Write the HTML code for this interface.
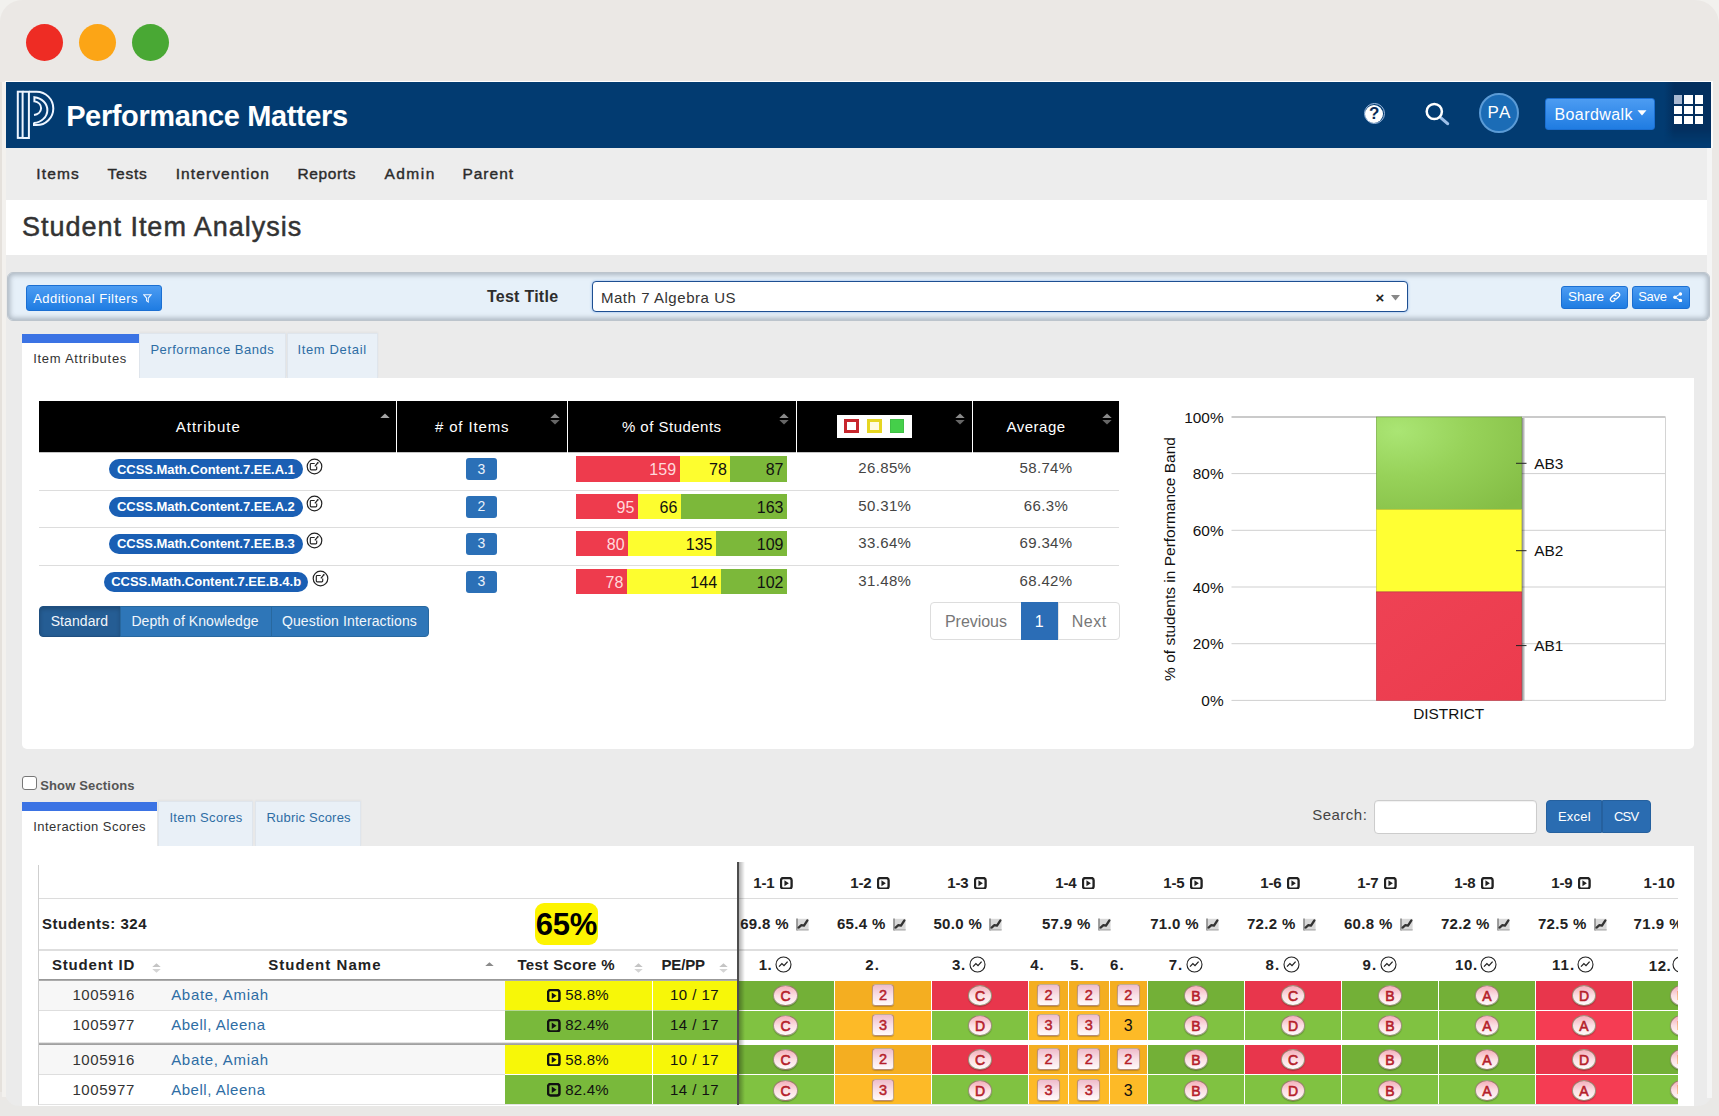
<!DOCTYPE html>
<html lang="en"><head><meta charset="utf-8"><title>Student Item Analysis</title>
<style>
html,body{margin:0;padding:0}
body{width:1719px;height:1116px;overflow:hidden;position:relative;background:#ebe8e5;font-family:'Liberation Sans', sans-serif;}
div,span.t,svg{position:absolute;box-sizing:border-box}
span.t{white-space:nowrap;display:block}

.btn{border-radius:3px;background:linear-gradient(#4c9cf2,#1f7ce2);border:1px solid #1b6fd2}
.tab{background:#e9f0f7;border:1px solid #dfe5ec;border-bottom:none;box-shadow:0 -1px 2px rgba(0,0,0,.04)}
.pill{background:#1a5fb4;border-radius:10px}
.nb{background:#2b70b7;border-radius:3px}
.ov{border-radius:50%;background:linear-gradient(#f4afbb,#fbdfe3 50%,#fffafa);border:1px solid rgba(60,70,20,.5);box-shadow:0 1px 1px rgba(0,0,0,.25)}
.sq{border-radius:3.5px;background:linear-gradient(#eebccb,#f9e0e6 50%,#fffafa);border:1px solid rgba(120,80,10,.45);box-shadow:0 1px 1px rgba(0,0,0,.2)}
</style></head>
<body>
<div style="left:0px;top:0px;width:1719px;height:1116px;background:#f2f1ee"></div>
<div style="left:0px;top:0px;width:1719px;height:1116px;background:#ebe8e5;border-radius:22px 24px 0 0"></div>
<div style="left:0px;top:1100px;width:1719px;height:16px;background:#e9e8e6"></div>
<div style="left:26.1px;top:23.7px;width:37.2px;height:37.2px;border-radius:50%;background:#ee2c24"></div>
<div style="left:79px;top:23.7px;width:37.2px;height:37.2px;border-radius:50%;background:#fca516"></div>
<div style="left:131.8px;top:23.7px;width:37.2px;height:37.2px;border-radius:50%;background:#49a834"></div>
<div style="left:5px;top:81px;width:1707px;height:1025px;background:#ebebeb;border-radius:0 0 14px 14px"></div>
<div style="left:1707px;top:148px;width:5px;height:950px;background:#f5f5f5"></div>
<div style="left:0px;top:82px;width:2.2px;height:1010px;background:#e5e1dc"></div>
<div style="left:2.2px;top:82px;width:3.6px;height:1015px;background:#f3f1ee"></div>
<div style="left:5px;top:81px;width:1707px;height:1px;background:#fff"></div>
<div style="left:6px;top:82px;width:1705px;height:66px;background:#023b71"></div>
<div style="left:1711px;top:81px;width:1.6px;height:67px;background:#fbfbfb"></div>
<div style="left:1664px;top:82px;width:47px;height:62px;background:linear-gradient(90deg,#023b71,#032f5e 22%);-webkit-mask-image:linear-gradient(#000 75%,transparent);mask-image:linear-gradient(#000 75%,transparent)"></div>
<svg style="left:6px;top:82px" width="60" height="66" viewBox="6 82 60 66" fill="none" stroke="#eef5ff" stroke-width="2" stroke-linejoin="miter">
<rect x="17.8" y="91.7" width="4.8" height="46.2"/>
<path d="M22.6 91.7H28.9V137.9H22.6"/>
<path d="M28.9 91.7H36.6A16.7 16.7 0 0 1 36.6 125.1H34V122.6"/>
<path d="M34 122.9A14.4 12.9 0 0 0 34.4 97.2V101.3A8.3 6.9 0 0 1 34 114.9"/>
</svg>
<span id="t0" class="t" style="left:66.15px;top:98.53px;font-size:29px;line-height:34.8px;font-weight:700;color:#fff;letter-spacing:-0.364px;">Performance Matters</span>
<div style="left:1363.5px;top:103.3px;width:21.2px;height:21.2px;border-radius:50%;border:1px solid #9fbbe0"></div>
<div style="left:1365.1px;top:104.9px;width:18px;height:18px;border-radius:50%;background:#fff"></div>
<span id="t1" class="t" style="left:1224.2px;width:300px;text-align:center;top:104.20px;font-size:17px;line-height:20.4px;font-weight:700;color:#082b57;">?</span>
<svg style="left:1420px;top:98px" width="34" height="32" viewBox="1420 98 34 32" fill="none">
<line x1="1440.6" y1="117.6" x2="1447.6" y2="123.6" stroke="#9dbfe8" stroke-width="3.2" stroke-linecap="round"/>
<circle cx="1434.3" cy="111.5" r="7.6" stroke="#fff" stroke-width="2.5"/></svg>
<div style="left:1479px;top:93.3px;width:39.8px;height:39.8px;border-radius:50%;background:#1b6cb6;border:2px solid #5b9bd6"></div>
<span id="t2" class="t" style="left:1487.40px;top:103.20px;font-size:17px;line-height:20.4px;color:#fff;letter-spacing:1.478px;">PA</span>
<div class="btn" style="left:1545px;top:97.7px;width:110.3px;height:32px;"></div>
<span id="t3" class="t" style="left:1554.40px;top:104.58px;font-size:16px;line-height:19.2px;color:#fff;letter-spacing:0.437px;">Boardwalk</span>
<svg style="left:1637px;top:110px" width="10" height="6" viewBox="0 0 10 6"><path d="M0.5 0.3h9L5 5.6z" fill="#fff"/></svg>
<div style="left:1674px;top:95.3px;width:8.3px;height:8.3px;background:#a9b9d2"></div>
<div style="left:1684.3px;top:95.3px;width:8.3px;height:8.3px;background:#fff"></div>
<div style="left:1694.6px;top:95.3px;width:8.3px;height:8.3px;background:#fff"></div>
<div style="left:1674px;top:105.6px;width:8.3px;height:8.3px;background:#fff"></div>
<div style="left:1684.3px;top:105.6px;width:8.3px;height:8.3px;background:#fff"></div>
<div style="left:1694.6px;top:105.6px;width:8.3px;height:8.3px;background:#fff"></div>
<div style="left:1674px;top:115.9px;width:8.3px;height:8.3px;background:#fff"></div>
<div style="left:1684.3px;top:115.9px;width:8.3px;height:8.3px;background:#fff"></div>
<div style="left:1694.6px;top:115.9px;width:8.3px;height:8.3px;background:#fff"></div>
<div style="left:6px;top:148px;width:1701px;height:52px;background:#ededed"></div>
<span id="t4" class="t" style="left:36.15px;top:165.08px;font-size:15.5px;line-height:18.6px;color:#2b2b2b;letter-spacing:1.198px;-webkit-text-stroke:.4px #2b2b2b;">Items</span>
<span id="t5" class="t" style="left:107.40px;top:165.08px;font-size:15.5px;line-height:18.6px;color:#2b2b2b;letter-spacing:0.816px;-webkit-text-stroke:.4px #2b2b2b;">Tests</span>
<span id="t6" class="t" style="left:175.65px;top:165.08px;font-size:15.5px;line-height:18.6px;color:#2b2b2b;letter-spacing:1.109px;-webkit-text-stroke:.4px #2b2b2b;">Intervention</span>
<span id="t7" class="t" style="left:297.40px;top:165.08px;font-size:15.5px;line-height:18.6px;color:#2b2b2b;letter-spacing:0.653px;-webkit-text-stroke:.4px #2b2b2b;">Reports</span>
<span id="t8" class="t" style="left:384.40px;top:165.08px;font-size:15.5px;line-height:18.6px;color:#2b2b2b;letter-spacing:1.503px;-webkit-text-stroke:.4px #2b2b2b;">Admin</span>
<span id="t9" class="t" style="left:462.40px;top:165.08px;font-size:15.5px;line-height:18.6px;color:#2b2b2b;letter-spacing:1.006px;-webkit-text-stroke:.4px #2b2b2b;">Parent</span>
<div style="left:6px;top:200px;width:1701px;height:55px;background:#fff"></div>
<span id="t10" class="t" style="left:21.90px;top:210.71px;font-size:27px;line-height:32.4px;color:#333;letter-spacing:0.990px;-webkit-text-stroke:0.5px #333;">Student Item Analysis</span>
<div style="left:6.6px;top:272.3px;width:1703.6px;height:48.4px;background:#e6f0f9;border-radius:6px;border:1px solid #bcc4cc;box-shadow:inset 0 0 5px 2px rgba(115,125,138,.5)"></div>
<div class="btn" style="left:26px;top:285px;width:136px;height:26px;"></div>
<span id="t11" class="t" style="left:33.15px;top:291.35px;font-size:13px;line-height:15.6px;color:#fff;letter-spacing:0.491px;">Additional Filters</span>
<svg style="left:143px;top:294px" width="8.8" height="8.8" viewBox="0 0 10 10" fill="none" stroke="#eef5ff" stroke-width="1.2"><path d="M0.8 0.8h8.4L6 4.6V9L4 7.6V4.6z"/></svg>
<span id="t12" class="t" style="left:486.90px;top:286.88px;font-size:16px;line-height:19.2px;font-weight:700;color:#2d2d2d;letter-spacing:0.270px;">Test Title</span>
<div style="left:591.5px;top:281px;width:816px;height:31.4px;background:#fff;border:1.7px solid #1d4f92;border-radius:4px;box-shadow:0 0 2.5px rgba(90,150,230,.7)"></div>
<span id="t13" class="t" style="left:600.90px;top:288.67px;font-size:15px;line-height:18px;color:#333;letter-spacing:0.550px;">Math 7 Algebra US</span>
<span id="t14" class="t" style="left:1229.8px;width:300px;text-align:center;top:289.17px;font-size:15px;line-height:18px;font-weight:700;color:#222;">&times;</span>
<svg style="left:1390.5px;top:294.5px" width="9" height="6" viewBox="0 0 9 6"><path d="M0 0h9L4.5 5.6z" fill="#888"/></svg>
<div class="btn" style="left:1561.2px;top:285.5px;width:66.6px;height:23px;"></div>
<span id="t15" class="t" style="left:1568.10px;top:288.86px;font-size:13.5px;line-height:16.2px;color:#fff;letter-spacing:-0.008px;">Share</span>
<svg style="left:1608.5px;top:291px" width="12" height="12" viewBox="0 0 12 12" fill="none" stroke="#fff" stroke-width="1.3" stroke-linecap="round"><path d="M5 7.2a2.2 2.2 0 0 0 3.1 0l2-2a2.2 2.2 0 0 0-3.1-3.1l-.8.8"/><path d="M7 4.8a2.2 2.2 0 0 0-3.1 0l-2 2a2.2 2.2 0 0 0 3.1 3.1l.8-.8"/></svg>
<div class="btn" style="left:1631.5px;top:285.5px;width:58.5px;height:23px;"></div>
<span id="t16" class="t" style="left:1638.20px;top:289.15px;font-size:13px;line-height:15.6px;color:#fff;letter-spacing:-0.280px;">Save</span>
<svg style="left:1673px;top:292px" width="9.5" height="10.4" viewBox="0 0 11 12" fill="#fff" stroke="#fff" stroke-width="1.2"><circle cx="8.6" cy="2.2" r="1.4"/><circle cx="2.2" cy="6" r="1.4"/><circle cx="8.6" cy="9.8" r="1.4"/><path d="M8.6 2.2L2.2 6l6.4 3.8" fill="none"/></svg>
<div class="tab" style="left:139px;top:333px;width:146.5px;height:45px;"></div>
<span id="t17" class="t" style="left:150.40px;top:342.35px;font-size:13px;line-height:15.6px;color:#2e6da4;letter-spacing:0.534px;">Performance Bands</span>
<div class="tab" style="left:286.5px;top:333px;width:91.5px;height:45px;"></div>
<span id="t18" class="t" style="left:297.40px;top:342.35px;font-size:13px;line-height:15.6px;color:#2e6da4;letter-spacing:0.656px;">Item Detail</span>
<div style="left:22px;top:378px;width:1672px;height:370.5px;background:#fff;border-radius:0 0 5px 5px"></div>
<div style="left:22px;top:334px;width:116.5px;height:46px;background:#fff"></div>
<div style="left:22px;top:334px;width:116.5px;height:9px;background:#3b73e4"></div>
<span id="t19" class="t" style="left:33.15px;top:350.85px;font-size:13px;line-height:15.6px;color:#333;letter-spacing:0.722px;">Item Attributes</span>
<div style="left:39px;top:401px;width:1080px;height:51px;background:#000"></div>
<div style="left:39px;top:452px;width:1080px;height:1px;background:#c4c4c4"></div>
<div style="left:396px;top:401px;width:1px;height:52px;background:#fff"></div>
<div style="left:567px;top:401px;width:1px;height:52px;background:#fff"></div>
<div style="left:796px;top:401px;width:1px;height:52px;background:#fff"></div>
<div style="left:972px;top:401px;width:1px;height:52px;background:#fff"></div>
<span id="t20" class="t" style="left:175.65px;top:418.17px;font-size:15px;line-height:18px;color:#fff;letter-spacing:1.041px;">Attribute</span>
<span id="t21" class="t" style="left:434.90px;top:418.17px;font-size:15px;line-height:18px;color:#fff;letter-spacing:0.871px;"># of Items</span>
<span id="t22" class="t" style="left:621.90px;top:418.17px;font-size:15px;line-height:18px;color:#fff;letter-spacing:0.483px;">% of Students</span>
<span id="t23" class="t" style="left:1006.40px;top:418.17px;font-size:15px;line-height:18px;color:#fff;letter-spacing:0.515px;">Average</span>
<svg style="left:379.5px;top:412.5px" width="10" height="12" viewBox="0 0 10 12"><path d="M0.3 5L5 0.6L9.7 5z" fill="#a5a5a5"/></svg>
<svg style="left:550px;top:413px" width="10" height="12" viewBox="0 0 10 12"><path d="M0.3 5L5 0.6L9.7 5z" fill="#8a8a8a"/><path d="M0.3 7L5 11.4L9.7 7z" fill="#666"/></svg>
<svg style="left:779px;top:413px" width="10" height="12" viewBox="0 0 10 12"><path d="M0.3 5L5 0.6L9.7 5z" fill="#8a8a8a"/><path d="M0.3 7L5 11.4L9.7 7z" fill="#666"/></svg>
<svg style="left:955px;top:413px" width="10" height="12" viewBox="0 0 10 12"><path d="M0.3 5L5 0.6L9.7 5z" fill="#8a8a8a"/><path d="M0.3 7L5 11.4L9.7 7z" fill="#666"/></svg>
<svg style="left:1102px;top:413px" width="10" height="12" viewBox="0 0 10 12"><path d="M0.3 5L5 0.6L9.7 5z" fill="#8a8a8a"/><path d="M0.3 7L5 11.4L9.7 7z" fill="#666"/></svg>
<div style="left:837px;top:414.5px;width:75px;height:23.5px;background:#fff"></div>
<div style="left:844px;top:419px;width:14.7px;height:13.7px;border:3px solid #c7262d;background:#fff"></div>
<div style="left:867px;top:419px;width:14.7px;height:13.7px;border:3px solid #e6d622;background:#fffbe0"></div>
<div style="left:890px;top:419px;width:14.2px;height:13.7px;background:#45cf4a;border:1px solid #3fc044"></div>
<div class="pill" style="left:109px;top:459px;width:193.5px;height:20px;"></div>
<span id="t24" class="t" style="left:116.90px;top:461.65px;font-size:13px;line-height:15.6px;font-weight:700;color:#fff;letter-spacing:-0.019px;">CCSS.Math.Content.7.EE.A.1</span>
<svg style="left:306.2px;top:457.7px" width="17" height="17" viewBox="0 0 17 17" fill="none" stroke="#222" stroke-width="1.1"><circle cx="8.5" cy="8.5" r="7.3" stroke-width="1.2"/><path d="M8.7 5.5H5.2Q4.3 5.5 4.3 6.4V10.9Q4.3 11.8 5.2 11.8H9.8Q10.7 11.8 10.7 10.9V8.4" stroke-width="1.15"/><path d="M8.9 8.3L11.5 5.2" stroke-width="1.3"/><circle cx="11.8" cy="4.8" r=".9" fill="#222" stroke="none"/></svg>
<div class="nb" style="left:465.5px;top:458px;width:31.5px;height:22px;"></div>
<span id="t25" class="t" style="left:331.3px;width:300px;text-align:center;top:460.96px;font-size:14px;line-height:16.8px;color:#eaf2fb;">3</span>
<div style="left:576px;top:456.2px;width:103.546px;height:25.5px;background:#ee3b4d"></div>
<div style="left:679.546px;top:456.2px;width:50.7963px;height:25.5px;background:#fdfd2f"></div>
<div style="left:730.343px;top:456.2px;width:56.6574px;height:25.5px;background:#7cb83a"></div>
<span id="t26" class="t" style="left:376.046px;width:300px;text-align:center;top:460.18px;font-size:16px;line-height:19.2px;color:#ffd9dc;text-align:right;">159</span>
<span id="t27" class="t" style="left:426.843px;width:300px;text-align:center;top:460.18px;font-size:16px;line-height:19.2px;color:#111;text-align:right;">78</span>
<span id="t28" class="t" style="left:483.5px;width:300px;text-align:center;top:460.18px;font-size:16px;line-height:19.2px;color:#111;text-align:right;">87</span>
<span id="t29" class="t" style="left:734.8px;width:300px;text-align:center;top:459.17px;font-size:15px;line-height:18px;color:#444;letter-spacing:.35px;">26.85%</span>
<span id="t30" class="t" style="left:896px;width:300px;text-align:center;top:459.17px;font-size:15px;line-height:18px;color:#444;letter-spacing:.35px;">58.74%</span>
<div style="left:39px;top:490px;width:1080px;height:1px;background:#ddd"></div>
<div class="pill" style="left:109px;top:496.5px;width:193.5px;height:20px;"></div>
<span id="t31" class="t" style="left:116.90px;top:499.15px;font-size:13px;line-height:15.6px;font-weight:700;color:#fff;letter-spacing:-0.019px;">CCSS.Math.Content.7.EE.A.2</span>
<svg style="left:306.2px;top:495.2px" width="17" height="17" viewBox="0 0 17 17" fill="none" stroke="#222" stroke-width="1.1"><circle cx="8.5" cy="8.5" r="7.3" stroke-width="1.2"/><path d="M8.7 5.5H5.2Q4.3 5.5 4.3 6.4V10.9Q4.3 11.8 5.2 11.8H9.8Q10.7 11.8 10.7 10.9V8.4" stroke-width="1.15"/><path d="M8.9 8.3L11.5 5.2" stroke-width="1.3"/><circle cx="11.8" cy="4.8" r=".9" fill="#222" stroke="none"/></svg>
<div class="nb" style="left:465.5px;top:495.5px;width:31.5px;height:22px;"></div>
<span id="t32" class="t" style="left:331.3px;width:300px;text-align:center;top:498.46px;font-size:14px;line-height:16.8px;color:#eaf2fb;">2</span>
<div style="left:576px;top:493.7px;width:61.8673px;height:25.5px;background:#ee3b4d"></div>
<div style="left:637.867px;top:493.7px;width:42.9815px;height:25.5px;background:#fdfd2f"></div>
<div style="left:680.849px;top:493.7px;width:106.151px;height:25.5px;background:#7cb83a"></div>
<span id="t33" class="t" style="left:334.367px;width:300px;text-align:center;top:497.68px;font-size:16px;line-height:19.2px;color:#ffd9dc;text-align:right;">95</span>
<span id="t34" class="t" style="left:377.349px;width:300px;text-align:center;top:497.68px;font-size:16px;line-height:19.2px;color:#111;text-align:right;">66</span>
<span id="t35" class="t" style="left:483.5px;width:300px;text-align:center;top:497.68px;font-size:16px;line-height:19.2px;color:#111;text-align:right;">163</span>
<span id="t36" class="t" style="left:734.8px;width:300px;text-align:center;top:496.67px;font-size:15px;line-height:18px;color:#444;letter-spacing:.35px;">50.31%</span>
<span id="t37" class="t" style="left:896px;width:300px;text-align:center;top:496.67px;font-size:15px;line-height:18px;color:#444;letter-spacing:.35px;">66.3%</span>
<div style="left:39px;top:527px;width:1080px;height:1px;background:#ddd"></div>
<div class="pill" style="left:109px;top:533.5px;width:193.5px;height:20px;"></div>
<span id="t38" class="t" style="left:116.90px;top:536.15px;font-size:13px;line-height:15.6px;font-weight:700;color:#fff;letter-spacing:-0.019px;">CCSS.Math.Content.7.EE.B.3</span>
<svg style="left:306.2px;top:532.2px" width="17" height="17" viewBox="0 0 17 17" fill="none" stroke="#222" stroke-width="1.1"><circle cx="8.5" cy="8.5" r="7.3" stroke-width="1.2"/><path d="M8.7 5.5H5.2Q4.3 5.5 4.3 6.4V10.9Q4.3 11.8 5.2 11.8H9.8Q10.7 11.8 10.7 10.9V8.4" stroke-width="1.15"/><path d="M8.9 8.3L11.5 5.2" stroke-width="1.3"/><circle cx="11.8" cy="4.8" r=".9" fill="#222" stroke="none"/></svg>
<div class="nb" style="left:465.5px;top:532.5px;width:31.5px;height:22px;"></div>
<span id="t39" class="t" style="left:331.3px;width:300px;text-align:center;top:535.46px;font-size:14px;line-height:16.8px;color:#eaf2fb;">3</span>
<div style="left:576px;top:530.7px;width:52.0988px;height:25.5px;background:#ee3b4d"></div>
<div style="left:628.099px;top:530.7px;width:87.9167px;height:25.5px;background:#fdfd2f"></div>
<div style="left:716.015px;top:530.7px;width:70.9846px;height:25.5px;background:#7cb83a"></div>
<span id="t40" class="t" style="left:324.599px;width:300px;text-align:center;top:534.68px;font-size:16px;line-height:19.2px;color:#ffd9dc;text-align:right;">80</span>
<span id="t41" class="t" style="left:412.515px;width:300px;text-align:center;top:534.68px;font-size:16px;line-height:19.2px;color:#111;text-align:right;">135</span>
<span id="t42" class="t" style="left:483.5px;width:300px;text-align:center;top:534.68px;font-size:16px;line-height:19.2px;color:#111;text-align:right;">109</span>
<span id="t43" class="t" style="left:734.8px;width:300px;text-align:center;top:533.67px;font-size:15px;line-height:18px;color:#444;letter-spacing:.35px;">33.64%</span>
<span id="t44" class="t" style="left:896px;width:300px;text-align:center;top:533.67px;font-size:15px;line-height:18px;color:#444;letter-spacing:.35px;">69.34%</span>
<div style="left:39px;top:565px;width:1080px;height:1px;background:#ddd"></div>
<div class="pill" style="left:104.25px;top:571.5px;width:204px;height:20px;"></div>
<span id="t45" class="t" style="left:111.15px;top:574.15px;font-size:13px;line-height:15.6px;font-weight:700;color:#fff;">CCSS.Math.Content.7.EE.B.4.b</span>
<svg style="left:312.4px;top:570.2px" width="17" height="17" viewBox="0 0 17 17" fill="none" stroke="#222" stroke-width="1.1"><circle cx="8.5" cy="8.5" r="7.3" stroke-width="1.2"/><path d="M8.7 5.5H5.2Q4.3 5.5 4.3 6.4V10.9Q4.3 11.8 5.2 11.8H9.8Q10.7 11.8 10.7 10.9V8.4" stroke-width="1.15"/><path d="M8.9 8.3L11.5 5.2" stroke-width="1.3"/><circle cx="11.8" cy="4.8" r=".9" fill="#222" stroke="none"/></svg>
<div class="nb" style="left:465.5px;top:570.5px;width:31.5px;height:22px;"></div>
<span id="t46" class="t" style="left:331.3px;width:300px;text-align:center;top:573.46px;font-size:14px;line-height:16.8px;color:#eaf2fb;">3</span>
<div style="left:576px;top:568.7px;width:50.7963px;height:25.5px;background:#ee3b4d"></div>
<div style="left:626.796px;top:568.7px;width:93.7778px;height:25.5px;background:#fdfd2f"></div>
<div style="left:720.574px;top:568.7px;width:66.4259px;height:25.5px;background:#7cb83a"></div>
<span id="t47" class="t" style="left:323.296px;width:300px;text-align:center;top:572.68px;font-size:16px;line-height:19.2px;color:#ffd9dc;text-align:right;">78</span>
<span id="t48" class="t" style="left:417.074px;width:300px;text-align:center;top:572.68px;font-size:16px;line-height:19.2px;color:#111;text-align:right;">144</span>
<span id="t49" class="t" style="left:483.5px;width:300px;text-align:center;top:572.68px;font-size:16px;line-height:19.2px;color:#111;text-align:right;">102</span>
<span id="t50" class="t" style="left:734.8px;width:300px;text-align:center;top:571.67px;font-size:15px;line-height:18px;color:#444;letter-spacing:.35px;">31.48%</span>
<span id="t51" class="t" style="left:896px;width:300px;text-align:center;top:571.67px;font-size:15px;line-height:18px;color:#444;letter-spacing:.35px;">68.42%</span>
<div style="left:39px;top:605.5px;width:81.5px;height:31.5px;background:#255d94;border-radius:4px 0 0 4px;border:1px solid #1f4f80;box-shadow:inset 0 2px 4px rgba(0,0,0,.2)"></div>
<div style="left:120px;top:605.5px;width:151.5px;height:31.5px;background:#2e76b8;border:1px solid #28689f"></div>
<div style="left:271.2px;top:605.5px;width:157.6px;height:31.5px;background:#2e76b8;border:1px solid #28689f;border-radius:0 4px 4px 0"></div>
<span id="t52" class="t" style="left:50.65px;top:613.06px;font-size:14px;line-height:16.8px;color:#f2f6fb;letter-spacing:0.089px;">Standard</span>
<span id="t53" class="t" style="left:131.40px;top:613.06px;font-size:14px;line-height:16.8px;color:#f2f6fb;letter-spacing:0.065px;">Depth of Knowledge</span>
<span id="t54" class="t" style="left:281.90px;top:613.06px;font-size:14px;line-height:16.8px;color:#f2f6fb;letter-spacing:0.133px;">Question Interactions</span>
<div style="left:930px;top:602px;width:190px;height:37.5px;background:#fff;border:1px solid #ddd;border-radius:4px"></div>
<div style="left:1020.8px;top:602px;width:37.4px;height:37.5px;background:#2b6db6"></div>
<div style="left:1058.2px;top:603px;width:1px;height:35.5px;background:#e4e4e4"></div>
<span id="t55" class="t" style="left:945.00px;top:611.88px;font-size:16px;line-height:19.2px;color:#777;letter-spacing:-0.050px;">Previous</span>
<span id="t56" class="t" style="left:889.2px;width:300px;text-align:center;top:611.88px;font-size:16px;line-height:19.2px;color:#fff;">1</span>
<span id="t57" class="t" style="left:1071.70px;top:611.88px;font-size:16px;line-height:19.2px;color:#777;letter-spacing:0.531px;">Next</span>
<svg style="left:1140px;top:395px" width="550" height="345" viewBox="1140 395 550 345" font-family="'Liberation Sans', sans-serif" font-size="14" fill="#111"><defs><radialGradient id="gg" cx="0.15" cy="0.15" r="1.1"><stop offset="0" stop-color="#aae574"/><stop offset="0.45" stop-color="#97d259"/><stop offset="1" stop-color="#84bd45"/></radialGradient><linearGradient id="gr" x1="0" y1="0" x2="1" y2="1"><stop offset="0" stop-color="#ee4254"/><stop offset="1" stop-color="#ec3b4d"/></linearGradient><linearGradient id="sh" x1="0" y1="0" x2="1" y2="0"><stop offset="0" stop-color="#000" stop-opacity=".55"/><stop offset="1" stop-color="#000" stop-opacity="0"/></linearGradient></defs><line x1="1231.5" y1="417" x2="1665.5" y2="417" stroke="#b9b9b9" stroke-width="1.4"/><text x="1223.6" y="422.5" text-anchor="end" font-size="15.4">100%</text><line x1="1231.5" y1="473.6" x2="1665.5" y2="473.6" stroke="#cfcfcf" stroke-width="1"/><text x="1223.6" y="479.1" text-anchor="end" font-size="15.4">80%</text><line x1="1231.5" y1="530.3" x2="1665.5" y2="530.3" stroke="#cfcfcf" stroke-width="1"/><text x="1223.6" y="535.8" text-anchor="end" font-size="15.4">60%</text><line x1="1231.5" y1="587" x2="1665.5" y2="587" stroke="#cfcfcf" stroke-width="1"/><text x="1223.6" y="592.5" text-anchor="end" font-size="15.4">40%</text><line x1="1231.5" y1="643.7" x2="1665.5" y2="643.7" stroke="#cfcfcf" stroke-width="1"/><text x="1223.6" y="649.2" text-anchor="end" font-size="15.4">20%</text><line x1="1231.5" y1="700.4" x2="1665.5" y2="700.4" stroke="#cfcfcf" stroke-width="1"/><text x="1223.6" y="705.9" text-anchor="end" font-size="15.4">0%</text><line x1="1665.5" y1="417" x2="1665.5" y2="700.4" stroke="#d4d4d4" stroke-width="1"/><rect x="1521.5" y="418" width="4" height="282.4" fill="url(#sh)"/><rect x="1376.3" y="417" width="145.4" height="92.6" fill="url(#gg)" stroke="#6fa23a" stroke-width=".6"/><rect x="1376.3" y="509.6" width="145.4" height="82.3" fill="#ffff33" stroke="#c9c92a" stroke-width=".6"/><rect x="1376.3" y="591.9" width="145.4" height="108.5" fill="url(#gr)" stroke="#b83040" stroke-width=".6"/><line x1="1516" y1="463.3" x2="1526.5" y2="463.3" stroke="#222" stroke-width="1"/><text x="1534.3" y="468.8" font-size="15.4">AB3</text><line x1="1516" y1="550.7" x2="1526.5" y2="550.7" stroke="#222" stroke-width="1"/><text x="1534.3" y="556.2" font-size="15.4">AB2</text><line x1="1516" y1="645.6" x2="1526.5" y2="645.6" stroke="#222" stroke-width="1"/><text x="1534.3" y="651.1" font-size="15.4">AB1</text><text x="1448.7" y="718.6" text-anchor="middle" font-size="15.4">DISTRICT</text><text transform="translate(1175 559) rotate(-90)" text-anchor="middle" font-size="15.5">% of students in Performance Band</text></svg>
<div style="left:22px;top:776px;width:15px;height:14px;background:#fff;border:1px solid #777;border-radius:3px"></div>
<span id="t58" class="t" style="left:40.15px;top:777.55px;font-size:13px;line-height:15.6px;font-weight:700;color:#555;letter-spacing:0.165px;">Show Sections</span>
<div class="tab" style="left:157.5px;top:801px;width:95.5px;height:45px;"></div>
<span id="t59" class="t" style="left:169.40px;top:809.85px;font-size:13px;line-height:15.6px;color:#2e6da4;letter-spacing:0.359px;">Item Scores</span>
<div class="tab" style="left:255px;top:801px;width:106px;height:45px;"></div>
<span id="t60" class="t" style="left:266.40px;top:809.85px;font-size:13px;line-height:15.6px;color:#2e6da4;letter-spacing:0.213px;">Rubric Scores</span>
<span id="t61" class="t" style="left:1312.20px;top:806.37px;font-size:15px;line-height:18px;color:#444;letter-spacing:0.499px;">Search:</span>
<div style="left:1373.5px;top:800px;width:163px;height:33.5px;background:#fff;border:1px solid #ccc;border-radius:4px;box-shadow:inset 0 1px 1px rgba(0,0,0,.06)"></div>
<div style="left:1545.8px;top:800px;width:56.2px;height:33px;background:#2a6cb1;border-radius:4px 0 0 4px;border:1px solid #25609e"></div>
<div style="left:1602px;top:800px;width:49.3px;height:33px;background:#2a6cb1;border-radius:0 4px 4px 0;border:1px solid #25609e"></div>
<span id="t62" class="t" style="left:1557.90px;top:808.65px;font-size:13px;line-height:15.6px;color:#fff;letter-spacing:0.226px;">Excel</span>
<span id="t63" class="t" style="left:1613.90px;top:808.65px;font-size:13px;line-height:15.6px;color:#fff;letter-spacing:-0.767px;">CSV</span>
<div style="left:22px;top:846px;width:1672px;height:259.5px;background:#fff"></div>
<div style="left:22px;top:802px;width:134.5px;height:46px;background:#fff"></div>
<div style="left:22px;top:802px;width:134.5px;height:9px;background:#3b73e4"></div>
<span id="t64" class="t" style="left:33.15px;top:818.65px;font-size:13px;line-height:15.6px;color:#333;letter-spacing:0.451px;">Interaction Scores</span>
<div style="left:38px;top:865px;width:1px;height:239.5px;background:#cfcfcf"></div>
<div style="left:39px;top:898px;width:1639px;height:1px;background:#dcdcdc"></div>
<div style="left:39px;top:948.8px;width:1639px;height:2px;background:#dedede"></div>
<span id="t65" class="t" style="left:41.90px;top:915.17px;font-size:15px;line-height:18px;font-weight:700;color:#222;letter-spacing:0.528px;">Students: 324</span>
<div style="left:534.5px;top:903px;width:63.5px;height:42px;background:#fdf400;border-radius:9px"></div>
<span id="t66" class="t" style="left:535.70px;top:906.36px;font-size:31px;line-height:37.2px;font-weight:700;color:#000;letter-spacing:-0.173px;">65%</span>
<span id="t67" class="t" style="left:51.90px;top:956.17px;font-size:15px;line-height:18px;font-weight:700;color:#222;letter-spacing:0.828px;">Student ID</span>
<svg style="left:151.5px;top:961.8px" width="9" height="12" viewBox="0 0 10 12"><path d="M0.3 5L5 0.6L9.7 5z" fill="#c4c4c4"/><path d="M0.3 7L5 11.4L9.7 7z" fill="#d4d4d4"/></svg>
<span id="t68" class="t" style="left:268.15px;top:956.17px;font-size:15px;line-height:18px;font-weight:700;color:#222;letter-spacing:1.054px;">Student Name</span>
<svg style="left:485px;top:960.5px" width="9" height="12" viewBox="0 0 10 12"><path d="M0.3 5L5 0.6L9.7 5z" fill="#8a8a8a"/></svg>
<span id="t69" class="t" style="left:517.40px;top:956.17px;font-size:15px;line-height:18px;font-weight:700;color:#222;letter-spacing:0.373px;">Test Score %</span>
<svg style="left:633.5px;top:961.8px" width="9" height="12" viewBox="0 0 10 12"><path d="M0.3 5L5 0.6L9.7 5z" fill="#c4c4c4"/><path d="M0.3 7L5 11.4L9.7 7z" fill="#d4d4d4"/></svg>
<span id="t70" class="t" style="left:661.40px;top:956.17px;font-size:15px;line-height:18px;font-weight:700;color:#222;letter-spacing:-0.122px;">PE/PP</span>
<svg style="left:718.5px;top:961.8px" width="9" height="12" viewBox="0 0 10 12"><path d="M0.3 5L5 0.6L9.7 5z" fill="#c4c4c4"/><path d="M0.3 7L5 11.4L9.7 7z" fill="#d4d4d4"/></svg>
<div style="left:39px;top:980px;width:466px;height:30px;background:#f7f7f7"></div>
<span id="t71" class="t" style="left:72.40px;top:986.47px;font-size:15px;line-height:18px;color:#333;letter-spacing:0.591px;">1005916</span>
<span id="t72" class="t" style="left:171.15px;top:986.47px;font-size:15px;line-height:18px;color:#2e6da4;letter-spacing:0.701px;">Abate, Amiah</span>
<div style="left:505px;top:980px;width:147px;height:30px;background:#f7f708"></div>
<div style="left:653px;top:980px;width:84px;height:30px;background:#f7f708"></div>
<svg style="left:547px;top:988.55px" width="13.5" height="13.5" viewBox="0 0 14 14"><rect x="1.1" y="1.1" width="11.8" height="11.8" rx="2.6" fill="none" stroke="#111" stroke-width="2.6"/><path d="M4.9 3.6L9.9 7L4.9 10.4z" fill="#111"/></svg>
<span id="t73" class="t" style="left:565.15px;top:986.47px;font-size:15px;line-height:18px;color:#111;letter-spacing:0.226px;">58.8%</span>
<span id="t74" class="t" style="left:669.90px;top:986.47px;font-size:15px;line-height:18px;color:#111;letter-spacing:0.471px;">10 / 17</span>
<div style="left:737px;top:980.5px;width:97px;height:29px;background:#73b037"></div>
<div class="ov" style="left:773.1px;top:985px;width:24.8px;height:21.2px;"></div>
<span id="t75" class="t" style="left:635.5px;width:300px;text-align:center;top:988.06px;font-size:14px;line-height:16.8px;color:#b51f2b;-webkit-text-stroke:.6px #b51f2b;">C</span>
<div style="left:835px;top:980.5px;width:96px;height:29px;background:#f4ae21"></div>
<div class="sq" style="left:871.7px;top:984.1px;width:22.6px;height:22px;"></div>
<span id="t76" class="t" style="left:733px;width:300px;text-align:center;top:987.17px;font-size:14.5px;line-height:17.4px;color:#b51f2b;-webkit-text-stroke:.5px #b51f2b;">2</span>
<div style="left:932px;top:980.5px;width:96px;height:29px;background:#e8364c"></div>
<div class="ov" style="left:967.6px;top:985px;width:24.8px;height:21.2px;"></div>
<span id="t77" class="t" style="left:830px;width:300px;text-align:center;top:988.06px;font-size:14px;line-height:16.8px;color:#b51f2b;-webkit-text-stroke:.6px #b51f2b;">C</span>
<div style="left:1029px;top:980.5px;width:39px;height:29px;background:#f4ae21"></div>
<div class="sq" style="left:1037.2px;top:984.1px;width:22.6px;height:22px;"></div>
<span id="t78" class="t" style="left:898.5px;width:300px;text-align:center;top:987.17px;font-size:14.5px;line-height:17.4px;color:#b51f2b;-webkit-text-stroke:.5px #b51f2b;">2</span>
<div style="left:1069px;top:980.5px;width:39.5px;height:29px;background:#f4ae21"></div>
<div class="sq" style="left:1077.45px;top:984.1px;width:22.6px;height:22px;"></div>
<span id="t79" class="t" style="left:938.75px;width:300px;text-align:center;top:987.17px;font-size:14.5px;line-height:17.4px;color:#b51f2b;-webkit-text-stroke:.5px #b51f2b;">2</span>
<div style="left:1109.5px;top:980.5px;width:37.5px;height:29px;background:#f4ae21"></div>
<div class="sq" style="left:1116.95px;top:984.1px;width:22.6px;height:22px;"></div>
<span id="t80" class="t" style="left:978.25px;width:300px;text-align:center;top:987.17px;font-size:14.5px;line-height:17.4px;color:#b51f2b;-webkit-text-stroke:.5px #b51f2b;">2</span>
<div style="left:1148px;top:980.5px;width:96px;height:29px;background:#73b037"></div>
<div class="ov" style="left:1183.6px;top:985px;width:24.8px;height:21.2px;"></div>
<span id="t81" class="t" style="left:1046px;width:300px;text-align:center;top:988.06px;font-size:14px;line-height:16.8px;color:#b51f2b;-webkit-text-stroke:.6px #b51f2b;">B</span>
<div style="left:1245px;top:980.5px;width:96px;height:29px;background:#e8364c"></div>
<div class="ov" style="left:1280.6px;top:985px;width:24.8px;height:21.2px;"></div>
<span id="t82" class="t" style="left:1143px;width:300px;text-align:center;top:988.06px;font-size:14px;line-height:16.8px;color:#b51f2b;-webkit-text-stroke:.6px #b51f2b;">C</span>
<div style="left:1342px;top:980.5px;width:96px;height:29px;background:#73b037"></div>
<div class="ov" style="left:1377.6px;top:985px;width:24.8px;height:21.2px;"></div>
<span id="t83" class="t" style="left:1240px;width:300px;text-align:center;top:988.06px;font-size:14px;line-height:16.8px;color:#b51f2b;-webkit-text-stroke:.6px #b51f2b;">B</span>
<div style="left:1439px;top:980.5px;width:96px;height:29px;background:#73b037"></div>
<div class="ov" style="left:1474.6px;top:985px;width:24.8px;height:21.2px;"></div>
<span id="t84" class="t" style="left:1337px;width:300px;text-align:center;top:988.06px;font-size:14px;line-height:16.8px;color:#b51f2b;-webkit-text-stroke:.6px #b51f2b;">A</span>
<div style="left:1536px;top:980.5px;width:96px;height:29px;background:#e8364c"></div>
<div class="ov" style="left:1571.6px;top:985px;width:24.8px;height:21.2px;"></div>
<span id="t85" class="t" style="left:1434px;width:300px;text-align:center;top:988.06px;font-size:14px;line-height:16.8px;color:#b51f2b;-webkit-text-stroke:.6px #b51f2b;">D</span>
<div style="left:1633px;top:980.5px;width:45px;height:29px;background:#73b037"></div>
<div style="left:1633px;top:980.5px;width:45px;height:29.0px;overflow:hidden"><div class="ov" style="left:36.5px;top:4.5px;width:24px;height:20.6px"></div><span class="t" style="left:43.9px;top:7.2px;font-size:13px;line-height:15.6px;font-weight:700;color:#b51f2b">B</span></div>
<div style="left:39px;top:1010px;width:466px;height:30px;background:#fff"></div>
<span id="t86" class="t" style="left:72.40px;top:1016.47px;font-size:15px;line-height:18px;color:#333;letter-spacing:0.591px;">1005977</span>
<span id="t87" class="t" style="left:171.15px;top:1016.47px;font-size:15px;line-height:18px;color:#2e6da4;letter-spacing:0.531px;">Abell, Aleena</span>
<div style="left:505px;top:1010px;width:147px;height:30px;background:#79b93b"></div>
<div style="left:653px;top:1010px;width:84px;height:30px;background:#79b93b"></div>
<svg style="left:547px;top:1018.55px" width="13.5" height="13.5" viewBox="0 0 14 14"><rect x="1.1" y="1.1" width="11.8" height="11.8" rx="2.6" fill="none" stroke="#111" stroke-width="2.6"/><path d="M4.9 3.6L9.9 7L4.9 10.4z" fill="#111"/></svg>
<span id="t88" class="t" style="left:565.15px;top:1016.47px;font-size:15px;line-height:18px;color:#111;letter-spacing:0.226px;">82.4%</span>
<span id="t89" class="t" style="left:669.90px;top:1016.47px;font-size:15px;line-height:18px;color:#111;letter-spacing:0.471px;">14 / 17</span>
<div style="left:737px;top:1010.5px;width:97px;height:29px;background:#80c241"></div>
<div class="ov" style="left:773.1px;top:1015px;width:24.8px;height:21.2px;"></div>
<span id="t90" class="t" style="left:635.5px;width:300px;text-align:center;top:1018.06px;font-size:14px;line-height:16.8px;color:#b51f2b;-webkit-text-stroke:.6px #b51f2b;">C</span>
<div style="left:835px;top:1010.5px;width:96px;height:29px;background:#fdba27"></div>
<div class="sq" style="left:871.7px;top:1014.1px;width:22.6px;height:22px;"></div>
<span id="t91" class="t" style="left:733px;width:300px;text-align:center;top:1017.17px;font-size:14.5px;line-height:17.4px;color:#b51f2b;-webkit-text-stroke:.5px #b51f2b;">3</span>
<div style="left:932px;top:1010.5px;width:96px;height:29px;background:#80c241"></div>
<div class="ov" style="left:967.6px;top:1015px;width:24.8px;height:21.2px;"></div>
<span id="t92" class="t" style="left:830px;width:300px;text-align:center;top:1018.06px;font-size:14px;line-height:16.8px;color:#b51f2b;-webkit-text-stroke:.6px #b51f2b;">D</span>
<div style="left:1029px;top:1010.5px;width:39px;height:29px;background:#fdba27"></div>
<div class="sq" style="left:1037.2px;top:1014.1px;width:22.6px;height:22px;"></div>
<span id="t93" class="t" style="left:898.5px;width:300px;text-align:center;top:1017.17px;font-size:14.5px;line-height:17.4px;color:#b51f2b;-webkit-text-stroke:.5px #b51f2b;">3</span>
<div style="left:1069px;top:1010.5px;width:39.5px;height:29px;background:#fdba27"></div>
<div class="sq" style="left:1077.45px;top:1014.1px;width:22.6px;height:22px;"></div>
<span id="t94" class="t" style="left:938.75px;width:300px;text-align:center;top:1017.17px;font-size:14.5px;line-height:17.4px;color:#b51f2b;-webkit-text-stroke:.5px #b51f2b;">3</span>
<div style="left:1109.5px;top:1010.5px;width:37.5px;height:29px;background:#fdba27"></div>
<span id="t95" class="t" style="left:978.25px;width:300px;text-align:center;top:1016.08px;font-size:16px;line-height:19.2px;color:#111;">3</span>
<div style="left:1148px;top:1010.5px;width:96px;height:29px;background:#80c241"></div>
<div class="ov" style="left:1183.6px;top:1015px;width:24.8px;height:21.2px;"></div>
<span id="t96" class="t" style="left:1046px;width:300px;text-align:center;top:1018.06px;font-size:14px;line-height:16.8px;color:#b51f2b;-webkit-text-stroke:.6px #b51f2b;">B</span>
<div style="left:1245px;top:1010.5px;width:96px;height:29px;background:#80c241"></div>
<div class="ov" style="left:1280.6px;top:1015px;width:24.8px;height:21.2px;"></div>
<span id="t97" class="t" style="left:1143px;width:300px;text-align:center;top:1018.06px;font-size:14px;line-height:16.8px;color:#b51f2b;-webkit-text-stroke:.6px #b51f2b;">D</span>
<div style="left:1342px;top:1010.5px;width:96px;height:29px;background:#80c241"></div>
<div class="ov" style="left:1377.6px;top:1015px;width:24.8px;height:21.2px;"></div>
<span id="t98" class="t" style="left:1240px;width:300px;text-align:center;top:1018.06px;font-size:14px;line-height:16.8px;color:#b51f2b;-webkit-text-stroke:.6px #b51f2b;">B</span>
<div style="left:1439px;top:1010.5px;width:96px;height:29px;background:#80c241"></div>
<div class="ov" style="left:1474.6px;top:1015px;width:24.8px;height:21.2px;"></div>
<span id="t99" class="t" style="left:1337px;width:300px;text-align:center;top:1018.06px;font-size:14px;line-height:16.8px;color:#b51f2b;-webkit-text-stroke:.6px #b51f2b;">A</span>
<div style="left:1536px;top:1010.5px;width:96px;height:29px;background:#f53c53"></div>
<div class="ov" style="left:1571.6px;top:1015px;width:24.8px;height:21.2px;"></div>
<span id="t100" class="t" style="left:1434px;width:300px;text-align:center;top:1018.06px;font-size:14px;line-height:16.8px;color:#b51f2b;-webkit-text-stroke:.6px #b51f2b;">A</span>
<div style="left:1633px;top:1010.5px;width:45px;height:29px;background:#80c241"></div>
<div style="left:1633px;top:1010.5px;width:45px;height:29.0px;overflow:hidden"><div class="ov" style="left:36.5px;top:4.5px;width:24px;height:20.6px"></div><span class="t" style="left:43.9px;top:7.2px;font-size:13px;line-height:15.6px;font-weight:700;color:#b51f2b">B</span></div>
<div style="left:39px;top:1044.5px;width:466px;height:29.5px;background:#f7f7f7"></div>
<span id="t101" class="t" style="left:72.40px;top:1050.72px;font-size:15px;line-height:18px;color:#333;letter-spacing:0.591px;">1005916</span>
<span id="t102" class="t" style="left:171.15px;top:1050.72px;font-size:15px;line-height:18px;color:#2e6da4;letter-spacing:0.701px;">Abate, Amiah</span>
<div style="left:505px;top:1044.5px;width:147px;height:29.5px;background:#f7f708"></div>
<div style="left:653px;top:1044.5px;width:84px;height:29.5px;background:#f7f708"></div>
<svg style="left:547px;top:1052.8px" width="13.5" height="13.5" viewBox="0 0 14 14"><rect x="1.1" y="1.1" width="11.8" height="11.8" rx="2.6" fill="none" stroke="#111" stroke-width="2.6"/><path d="M4.9 3.6L9.9 7L4.9 10.4z" fill="#111"/></svg>
<span id="t103" class="t" style="left:565.15px;top:1050.72px;font-size:15px;line-height:18px;color:#111;letter-spacing:0.226px;">58.8%</span>
<span id="t104" class="t" style="left:669.90px;top:1050.72px;font-size:15px;line-height:18px;color:#111;letter-spacing:0.471px;">10 / 17</span>
<div style="left:737px;top:1045px;width:97px;height:28.5px;background:#73b037"></div>
<div class="ov" style="left:773.1px;top:1049.25px;width:24.8px;height:21.2px;"></div>
<span id="t105" class="t" style="left:635.5px;width:300px;text-align:center;top:1052.31px;font-size:14px;line-height:16.8px;color:#b51f2b;-webkit-text-stroke:.6px #b51f2b;">C</span>
<div style="left:835px;top:1045px;width:96px;height:28.5px;background:#f4ae21"></div>
<div class="sq" style="left:871.7px;top:1048.35px;width:22.6px;height:22px;"></div>
<span id="t106" class="t" style="left:733px;width:300px;text-align:center;top:1051.42px;font-size:14.5px;line-height:17.4px;color:#b51f2b;-webkit-text-stroke:.5px #b51f2b;">2</span>
<div style="left:932px;top:1045px;width:96px;height:28.5px;background:#e8364c"></div>
<div class="ov" style="left:967.6px;top:1049.25px;width:24.8px;height:21.2px;"></div>
<span id="t107" class="t" style="left:830px;width:300px;text-align:center;top:1052.31px;font-size:14px;line-height:16.8px;color:#b51f2b;-webkit-text-stroke:.6px #b51f2b;">C</span>
<div style="left:1029px;top:1045px;width:39px;height:28.5px;background:#f4ae21"></div>
<div class="sq" style="left:1037.2px;top:1048.35px;width:22.6px;height:22px;"></div>
<span id="t108" class="t" style="left:898.5px;width:300px;text-align:center;top:1051.42px;font-size:14.5px;line-height:17.4px;color:#b51f2b;-webkit-text-stroke:.5px #b51f2b;">2</span>
<div style="left:1069px;top:1045px;width:39.5px;height:28.5px;background:#f4ae21"></div>
<div class="sq" style="left:1077.45px;top:1048.35px;width:22.6px;height:22px;"></div>
<span id="t109" class="t" style="left:938.75px;width:300px;text-align:center;top:1051.42px;font-size:14.5px;line-height:17.4px;color:#b51f2b;-webkit-text-stroke:.5px #b51f2b;">2</span>
<div style="left:1109.5px;top:1045px;width:37.5px;height:28.5px;background:#f4ae21"></div>
<div class="sq" style="left:1116.95px;top:1048.35px;width:22.6px;height:22px;"></div>
<span id="t110" class="t" style="left:978.25px;width:300px;text-align:center;top:1051.42px;font-size:14.5px;line-height:17.4px;color:#b51f2b;-webkit-text-stroke:.5px #b51f2b;">2</span>
<div style="left:1148px;top:1045px;width:96px;height:28.5px;background:#73b037"></div>
<div class="ov" style="left:1183.6px;top:1049.25px;width:24.8px;height:21.2px;"></div>
<span id="t111" class="t" style="left:1046px;width:300px;text-align:center;top:1052.31px;font-size:14px;line-height:16.8px;color:#b51f2b;-webkit-text-stroke:.6px #b51f2b;">B</span>
<div style="left:1245px;top:1045px;width:96px;height:28.5px;background:#e8364c"></div>
<div class="ov" style="left:1280.6px;top:1049.25px;width:24.8px;height:21.2px;"></div>
<span id="t112" class="t" style="left:1143px;width:300px;text-align:center;top:1052.31px;font-size:14px;line-height:16.8px;color:#b51f2b;-webkit-text-stroke:.6px #b51f2b;">C</span>
<div style="left:1342px;top:1045px;width:96px;height:28.5px;background:#73b037"></div>
<div class="ov" style="left:1377.6px;top:1049.25px;width:24.8px;height:21.2px;"></div>
<span id="t113" class="t" style="left:1240px;width:300px;text-align:center;top:1052.31px;font-size:14px;line-height:16.8px;color:#b51f2b;-webkit-text-stroke:.6px #b51f2b;">B</span>
<div style="left:1439px;top:1045px;width:96px;height:28.5px;background:#73b037"></div>
<div class="ov" style="left:1474.6px;top:1049.25px;width:24.8px;height:21.2px;"></div>
<span id="t114" class="t" style="left:1337px;width:300px;text-align:center;top:1052.31px;font-size:14px;line-height:16.8px;color:#b51f2b;-webkit-text-stroke:.6px #b51f2b;">A</span>
<div style="left:1536px;top:1045px;width:96px;height:28.5px;background:#e8364c"></div>
<div class="ov" style="left:1571.6px;top:1049.25px;width:24.8px;height:21.2px;"></div>
<span id="t115" class="t" style="left:1434px;width:300px;text-align:center;top:1052.31px;font-size:14px;line-height:16.8px;color:#b51f2b;-webkit-text-stroke:.6px #b51f2b;">D</span>
<div style="left:1633px;top:1045px;width:45px;height:28.5px;background:#73b037"></div>
<div style="left:1633px;top:1045px;width:45px;height:28.5px;overflow:hidden"><div class="ov" style="left:36.5px;top:4.25px;width:24px;height:20.6px"></div><span class="t" style="left:43.9px;top:6.95px;font-size:13px;line-height:15.6px;font-weight:700;color:#b51f2b">B</span></div>
<div style="left:39px;top:1074.5px;width:466px;height:30px;background:#fff"></div>
<span id="t116" class="t" style="left:72.40px;top:1080.97px;font-size:15px;line-height:18px;color:#333;letter-spacing:0.591px;">1005977</span>
<span id="t117" class="t" style="left:171.15px;top:1080.97px;font-size:15px;line-height:18px;color:#2e6da4;letter-spacing:0.531px;">Abell, Aleena</span>
<div style="left:505px;top:1074.5px;width:147px;height:30px;background:#79b93b"></div>
<div style="left:653px;top:1074.5px;width:84px;height:30px;background:#79b93b"></div>
<svg style="left:547px;top:1083.05px" width="13.5" height="13.5" viewBox="0 0 14 14"><rect x="1.1" y="1.1" width="11.8" height="11.8" rx="2.6" fill="none" stroke="#111" stroke-width="2.6"/><path d="M4.9 3.6L9.9 7L4.9 10.4z" fill="#111"/></svg>
<span id="t118" class="t" style="left:565.15px;top:1080.97px;font-size:15px;line-height:18px;color:#111;letter-spacing:0.226px;">82.4%</span>
<span id="t119" class="t" style="left:669.90px;top:1080.97px;font-size:15px;line-height:18px;color:#111;letter-spacing:0.471px;">14 / 17</span>
<div style="left:737px;top:1075px;width:97px;height:29px;background:#80c241"></div>
<div class="ov" style="left:773.1px;top:1079.5px;width:24.8px;height:21.2px;"></div>
<span id="t120" class="t" style="left:635.5px;width:300px;text-align:center;top:1082.56px;font-size:14px;line-height:16.8px;color:#b51f2b;-webkit-text-stroke:.6px #b51f2b;">C</span>
<div style="left:835px;top:1075px;width:96px;height:29px;background:#fdba27"></div>
<div class="sq" style="left:871.7px;top:1078.6px;width:22.6px;height:22px;"></div>
<span id="t121" class="t" style="left:733px;width:300px;text-align:center;top:1081.67px;font-size:14.5px;line-height:17.4px;color:#b51f2b;-webkit-text-stroke:.5px #b51f2b;">3</span>
<div style="left:932px;top:1075px;width:96px;height:29px;background:#80c241"></div>
<div class="ov" style="left:967.6px;top:1079.5px;width:24.8px;height:21.2px;"></div>
<span id="t122" class="t" style="left:830px;width:300px;text-align:center;top:1082.56px;font-size:14px;line-height:16.8px;color:#b51f2b;-webkit-text-stroke:.6px #b51f2b;">D</span>
<div style="left:1029px;top:1075px;width:39px;height:29px;background:#fdba27"></div>
<div class="sq" style="left:1037.2px;top:1078.6px;width:22.6px;height:22px;"></div>
<span id="t123" class="t" style="left:898.5px;width:300px;text-align:center;top:1081.67px;font-size:14.5px;line-height:17.4px;color:#b51f2b;-webkit-text-stroke:.5px #b51f2b;">3</span>
<div style="left:1069px;top:1075px;width:39.5px;height:29px;background:#fdba27"></div>
<div class="sq" style="left:1077.45px;top:1078.6px;width:22.6px;height:22px;"></div>
<span id="t124" class="t" style="left:938.75px;width:300px;text-align:center;top:1081.67px;font-size:14.5px;line-height:17.4px;color:#b51f2b;-webkit-text-stroke:.5px #b51f2b;">3</span>
<div style="left:1109.5px;top:1075px;width:37.5px;height:29px;background:#fdba27"></div>
<span id="t125" class="t" style="left:978.25px;width:300px;text-align:center;top:1080.58px;font-size:16px;line-height:19.2px;color:#111;">3</span>
<div style="left:1148px;top:1075px;width:96px;height:29px;background:#80c241"></div>
<div class="ov" style="left:1183.6px;top:1079.5px;width:24.8px;height:21.2px;"></div>
<span id="t126" class="t" style="left:1046px;width:300px;text-align:center;top:1082.56px;font-size:14px;line-height:16.8px;color:#b51f2b;-webkit-text-stroke:.6px #b51f2b;">B</span>
<div style="left:1245px;top:1075px;width:96px;height:29px;background:#80c241"></div>
<div class="ov" style="left:1280.6px;top:1079.5px;width:24.8px;height:21.2px;"></div>
<span id="t127" class="t" style="left:1143px;width:300px;text-align:center;top:1082.56px;font-size:14px;line-height:16.8px;color:#b51f2b;-webkit-text-stroke:.6px #b51f2b;">D</span>
<div style="left:1342px;top:1075px;width:96px;height:29px;background:#80c241"></div>
<div class="ov" style="left:1377.6px;top:1079.5px;width:24.8px;height:21.2px;"></div>
<span id="t128" class="t" style="left:1240px;width:300px;text-align:center;top:1082.56px;font-size:14px;line-height:16.8px;color:#b51f2b;-webkit-text-stroke:.6px #b51f2b;">B</span>
<div style="left:1439px;top:1075px;width:96px;height:29px;background:#80c241"></div>
<div class="ov" style="left:1474.6px;top:1079.5px;width:24.8px;height:21.2px;"></div>
<span id="t129" class="t" style="left:1337px;width:300px;text-align:center;top:1082.56px;font-size:14px;line-height:16.8px;color:#b51f2b;-webkit-text-stroke:.6px #b51f2b;">A</span>
<div style="left:1536px;top:1075px;width:96px;height:29px;background:#f53c53"></div>
<div class="ov" style="left:1571.6px;top:1079.5px;width:24.8px;height:21.2px;"></div>
<span id="t130" class="t" style="left:1434px;width:300px;text-align:center;top:1082.56px;font-size:14px;line-height:16.8px;color:#b51f2b;-webkit-text-stroke:.6px #b51f2b;">A</span>
<div style="left:1633px;top:1075px;width:45px;height:29px;background:#80c241"></div>
<div style="left:1633px;top:1075px;width:45px;height:29px;overflow:hidden"><div class="ov" style="left:36.5px;top:4.5px;width:24px;height:20.6px"></div><span class="t" style="left:43.9px;top:7.2px;font-size:13px;line-height:15.6px;font-weight:700;color:#b51f2b">B</span></div>
<div style="left:505px;top:1009.6px;width:232px;height:1.2px;background:rgba(255,255,255,.45)"></div>
<div style="left:505px;top:1073.9px;width:232px;height:1.2px;background:rgba(255,255,255,.45)"></div>
<div style="left:39px;top:1104px;width:1639px;height:1px;background:#e2e2e2"></div>
<div style="left:39px;top:1009.6px;width:466px;height:1px;background:#dedede"></div>
<div style="left:39px;top:1073.9px;width:466px;height:1px;background:#dedede"></div>
<div style="left:39px;top:978.8px;width:698px;height:1.8px;background:linear-gradient(#8f8f8f,#b5b5b5)"></div>
<div style="left:738px;top:979.4px;width:940px;height:1.2px;background:rgba(255,255,255,.6)"></div>
<div style="left:39px;top:1040px;width:1639px;height:5px;background:#fff"></div>
<div style="left:39px;top:1042.2px;width:698px;height:2.8px;background:linear-gradient(#fdfdfd,#8d8d8d 70%,#b9b9b9)"></div>
<div style="left:739px;top:862px;width:6px;height:242px;background:linear-gradient(90deg,rgba(0,0,0,.30),rgba(0,0,0,0))"></div>
<div style="left:736.7px;top:862px;width:2.3px;height:242.5px;background:#4d4d4d"></div>
<span id="t131" class="t" style="left:753.20px;top:873.67px;font-size:15px;line-height:18px;font-weight:700;color:#222;letter-spacing:-0.144px;">1-1</span>
<svg style="left:780.3px;top:876.9px" width="12.6" height="12.6" viewBox="0 0 14 14"><rect x="1.1" y="1.1" width="11.8" height="11.8" rx="2.6" fill="none" stroke="#222" stroke-width="2.6"/><path d="M4.9 3.6L9.9 7L4.9 10.4z" fill="#222"/></svg>
<span id="t132" class="t" style="left:850.20px;top:873.67px;font-size:15px;line-height:18px;font-weight:700;color:#222;letter-spacing:-0.144px;">1-2</span>
<svg style="left:877.3px;top:876.9px" width="12.6" height="12.6" viewBox="0 0 14 14"><rect x="1.1" y="1.1" width="11.8" height="11.8" rx="2.6" fill="none" stroke="#222" stroke-width="2.6"/><path d="M4.9 3.6L9.9 7L4.9 10.4z" fill="#222"/></svg>
<span id="t133" class="t" style="left:947.20px;top:873.67px;font-size:15px;line-height:18px;font-weight:700;color:#222;letter-spacing:-0.144px;">1-3</span>
<svg style="left:974.3px;top:876.9px" width="12.6" height="12.6" viewBox="0 0 14 14"><rect x="1.1" y="1.1" width="11.8" height="11.8" rx="2.6" fill="none" stroke="#222" stroke-width="2.6"/><path d="M4.9 3.6L9.9 7L4.9 10.4z" fill="#222"/></svg>
<span id="t134" class="t" style="left:1055.20px;top:873.67px;font-size:15px;line-height:18px;font-weight:700;color:#222;letter-spacing:-0.144px;">1-4</span>
<svg style="left:1082.3px;top:876.9px" width="12.6" height="12.6" viewBox="0 0 14 14"><rect x="1.1" y="1.1" width="11.8" height="11.8" rx="2.6" fill="none" stroke="#222" stroke-width="2.6"/><path d="M4.9 3.6L9.9 7L4.9 10.4z" fill="#222"/></svg>
<span id="t135" class="t" style="left:1163.20px;top:873.67px;font-size:15px;line-height:18px;font-weight:700;color:#222;letter-spacing:-0.144px;">1-5</span>
<svg style="left:1190.3px;top:876.9px" width="12.6" height="12.6" viewBox="0 0 14 14"><rect x="1.1" y="1.1" width="11.8" height="11.8" rx="2.6" fill="none" stroke="#222" stroke-width="2.6"/><path d="M4.9 3.6L9.9 7L4.9 10.4z" fill="#222"/></svg>
<span id="t136" class="t" style="left:1260.20px;top:873.67px;font-size:15px;line-height:18px;font-weight:700;color:#222;letter-spacing:-0.144px;">1-6</span>
<svg style="left:1287.3px;top:876.9px" width="12.6" height="12.6" viewBox="0 0 14 14"><rect x="1.1" y="1.1" width="11.8" height="11.8" rx="2.6" fill="none" stroke="#222" stroke-width="2.6"/><path d="M4.9 3.6L9.9 7L4.9 10.4z" fill="#222"/></svg>
<span id="t137" class="t" style="left:1357.20px;top:873.67px;font-size:15px;line-height:18px;font-weight:700;color:#222;letter-spacing:-0.144px;">1-7</span>
<svg style="left:1384.3px;top:876.9px" width="12.6" height="12.6" viewBox="0 0 14 14"><rect x="1.1" y="1.1" width="11.8" height="11.8" rx="2.6" fill="none" stroke="#222" stroke-width="2.6"/><path d="M4.9 3.6L9.9 7L4.9 10.4z" fill="#222"/></svg>
<span id="t138" class="t" style="left:1454.20px;top:873.67px;font-size:15px;line-height:18px;font-weight:700;color:#222;letter-spacing:-0.144px;">1-8</span>
<svg style="left:1481.3px;top:876.9px" width="12.6" height="12.6" viewBox="0 0 14 14"><rect x="1.1" y="1.1" width="11.8" height="11.8" rx="2.6" fill="none" stroke="#222" stroke-width="2.6"/><path d="M4.9 3.6L9.9 7L4.9 10.4z" fill="#222"/></svg>
<span id="t139" class="t" style="left:1551.20px;top:873.67px;font-size:15px;line-height:18px;font-weight:700;color:#222;letter-spacing:-0.144px;">1-9</span>
<svg style="left:1578.3px;top:876.9px" width="12.6" height="12.6" viewBox="0 0 14 14"><rect x="1.1" y="1.1" width="11.8" height="11.8" rx="2.6" fill="none" stroke="#222" stroke-width="2.6"/><path d="M4.9 3.6L9.9 7L4.9 10.4z" fill="#222"/></svg>
<div style="left:1600px;top:870px;width:78px;height:108px;overflow:hidden">
<span class="t" style="left:43.4px;top:4.4px;font-size:15px;line-height:18px;font-weight:700;color:#222;letter-spacing:.45px">1-10</span>
<span class="t" style="left:33.5px;top:45.4px;font-size:15px;line-height:18px;font-weight:700;color:#222;letter-spacing:.5px">71.9 %</span>
<span class="t" style="left:48.7px;top:86.9px;font-size:15px;line-height:18px;font-weight:700;color:#222;letter-spacing:.6px">12.</span>
<svg style="left:71.5px;top:86px" width="17" height="17" viewBox="0 0 17 17" fill="none" stroke="#222" stroke-width="1.1"><circle cx="8.5" cy="8.5" r="7.5"/></svg>
</div>
<span id="t140" class="t" style="left:740.15px;top:914.67px;font-size:15px;line-height:18px;font-weight:700;color:#222;letter-spacing:0.359px;">69.8 %</span>
<svg style="left:795.75px;top:917.8px" width="13" height="13" viewBox="0 0 13 13"><rect x="1" y="0.8" width="11.6" height="11.6" fill="#d9d9d9"/><path d="M1 0.4V12.4" stroke="#8a8a8a" stroke-width="1.6" fill="none"/><path d="M1 11.8H12.6" stroke="#b5b5b5" stroke-width="1.4" fill="none"/><path d="M2.6 9.6L5.4 7.2L8 7.6L11.4 2.4" fill="none" stroke="#333" stroke-width="2.3" stroke-linejoin="round" stroke-linecap="round"/></svg>
<span id="t141" class="t" style="left:836.90px;top:914.67px;font-size:15px;line-height:18px;font-weight:700;color:#222;letter-spacing:0.359px;">65.4 %</span>
<svg style="left:892.5px;top:917.8px" width="13" height="13" viewBox="0 0 13 13"><rect x="1" y="0.8" width="11.6" height="11.6" fill="#d9d9d9"/><path d="M1 0.4V12.4" stroke="#8a8a8a" stroke-width="1.6" fill="none"/><path d="M1 11.8H12.6" stroke="#b5b5b5" stroke-width="1.4" fill="none"/><path d="M2.6 9.6L5.4 7.2L8 7.6L11.4 2.4" fill="none" stroke="#333" stroke-width="2.3" stroke-linejoin="round" stroke-linecap="round"/></svg>
<span id="t142" class="t" style="left:933.40px;top:914.67px;font-size:15px;line-height:18px;font-weight:700;color:#222;letter-spacing:0.359px;">50.0 %</span>
<svg style="left:989px;top:917.8px" width="13" height="13" viewBox="0 0 13 13"><rect x="1" y="0.8" width="11.6" height="11.6" fill="#d9d9d9"/><path d="M1 0.4V12.4" stroke="#8a8a8a" stroke-width="1.6" fill="none"/><path d="M1 11.8H12.6" stroke="#b5b5b5" stroke-width="1.4" fill="none"/><path d="M2.6 9.6L5.4 7.2L8 7.6L11.4 2.4" fill="none" stroke="#333" stroke-width="2.3" stroke-linejoin="round" stroke-linecap="round"/></svg>
<span id="t143" class="t" style="left:1041.90px;top:914.67px;font-size:15px;line-height:18px;font-weight:700;color:#222;letter-spacing:0.359px;">57.9 %</span>
<svg style="left:1097.5px;top:917.8px" width="13" height="13" viewBox="0 0 13 13"><rect x="1" y="0.8" width="11.6" height="11.6" fill="#d9d9d9"/><path d="M1 0.4V12.4" stroke="#8a8a8a" stroke-width="1.6" fill="none"/><path d="M1 11.8H12.6" stroke="#b5b5b5" stroke-width="1.4" fill="none"/><path d="M2.6 9.6L5.4 7.2L8 7.6L11.4 2.4" fill="none" stroke="#333" stroke-width="2.3" stroke-linejoin="round" stroke-linecap="round"/></svg>
<span id="t144" class="t" style="left:1150.15px;top:914.67px;font-size:15px;line-height:18px;font-weight:700;color:#222;letter-spacing:0.359px;">71.0 %</span>
<svg style="left:1205.75px;top:917.8px" width="13" height="13" viewBox="0 0 13 13"><rect x="1" y="0.8" width="11.6" height="11.6" fill="#d9d9d9"/><path d="M1 0.4V12.4" stroke="#8a8a8a" stroke-width="1.6" fill="none"/><path d="M1 11.8H12.6" stroke="#b5b5b5" stroke-width="1.4" fill="none"/><path d="M2.6 9.6L5.4 7.2L8 7.6L11.4 2.4" fill="none" stroke="#333" stroke-width="2.3" stroke-linejoin="round" stroke-linecap="round"/></svg>
<span id="t145" class="t" style="left:1246.90px;top:914.67px;font-size:15px;line-height:18px;font-weight:700;color:#222;letter-spacing:0.359px;">72.2 %</span>
<svg style="left:1302.5px;top:917.8px" width="13" height="13" viewBox="0 0 13 13"><rect x="1" y="0.8" width="11.6" height="11.6" fill="#d9d9d9"/><path d="M1 0.4V12.4" stroke="#8a8a8a" stroke-width="1.6" fill="none"/><path d="M1 11.8H12.6" stroke="#b5b5b5" stroke-width="1.4" fill="none"/><path d="M2.6 9.6L5.4 7.2L8 7.6L11.4 2.4" fill="none" stroke="#333" stroke-width="2.3" stroke-linejoin="round" stroke-linecap="round"/></svg>
<span id="t146" class="t" style="left:1343.90px;top:914.67px;font-size:15px;line-height:18px;font-weight:700;color:#222;letter-spacing:0.359px;">60.8 %</span>
<svg style="left:1399.5px;top:917.8px" width="13" height="13" viewBox="0 0 13 13"><rect x="1" y="0.8" width="11.6" height="11.6" fill="#d9d9d9"/><path d="M1 0.4V12.4" stroke="#8a8a8a" stroke-width="1.6" fill="none"/><path d="M1 11.8H12.6" stroke="#b5b5b5" stroke-width="1.4" fill="none"/><path d="M2.6 9.6L5.4 7.2L8 7.6L11.4 2.4" fill="none" stroke="#333" stroke-width="2.3" stroke-linejoin="round" stroke-linecap="round"/></svg>
<span id="t147" class="t" style="left:1440.90px;top:914.67px;font-size:15px;line-height:18px;font-weight:700;color:#222;letter-spacing:0.359px;">72.2 %</span>
<svg style="left:1496.5px;top:917.8px" width="13" height="13" viewBox="0 0 13 13"><rect x="1" y="0.8" width="11.6" height="11.6" fill="#d9d9d9"/><path d="M1 0.4V12.4" stroke="#8a8a8a" stroke-width="1.6" fill="none"/><path d="M1 11.8H12.6" stroke="#b5b5b5" stroke-width="1.4" fill="none"/><path d="M2.6 9.6L5.4 7.2L8 7.6L11.4 2.4" fill="none" stroke="#333" stroke-width="2.3" stroke-linejoin="round" stroke-linecap="round"/></svg>
<span id="t148" class="t" style="left:1537.90px;top:914.67px;font-size:15px;line-height:18px;font-weight:700;color:#222;letter-spacing:0.359px;">72.5 %</span>
<svg style="left:1593.5px;top:917.8px" width="13" height="13" viewBox="0 0 13 13"><rect x="1" y="0.8" width="11.6" height="11.6" fill="#d9d9d9"/><path d="M1 0.4V12.4" stroke="#8a8a8a" stroke-width="1.6" fill="none"/><path d="M1 11.8H12.6" stroke="#b5b5b5" stroke-width="1.4" fill="none"/><path d="M2.6 9.6L5.4 7.2L8 7.6L11.4 2.4" fill="none" stroke="#333" stroke-width="2.3" stroke-linejoin="round" stroke-linecap="round"/></svg>
<span id="t149" class="t" style="left:758.65px;top:956.47px;font-size:15px;line-height:18px;font-weight:700;color:#222;letter-spacing:0.434px;">1.</span>
<svg style="left:775.3px;top:956px" width="17" height="17" viewBox="0 0 17 17" fill="none" stroke="#222"><circle cx="8.5" cy="8.5" r="7.5" stroke-width="1.1"/><path d="M4 10.6L6.9 7.6L9 9.6L12.6 5.6" stroke-width="1.3"/></svg>
<span id="t150" class="t" style="left:865.15px;top:956.47px;font-size:15px;line-height:18px;font-weight:700;color:#222;letter-spacing:1.184px;">2.</span>
<span id="t151" class="t" style="left:951.90px;top:956.47px;font-size:15px;line-height:18px;font-weight:700;color:#222;letter-spacing:0.684px;">3.</span>
<svg style="left:969px;top:956px" width="17" height="17" viewBox="0 0 17 17" fill="none" stroke="#222"><circle cx="8.5" cy="8.5" r="7.5" stroke-width="1.1"/><path d="M4 10.6L6.9 7.6L9 9.6L12.6 5.6" stroke-width="1.3"/></svg>
<span id="t152" class="t" style="left:1030.15px;top:956.47px;font-size:15px;line-height:18px;font-weight:700;color:#222;letter-spacing:0.934px;">4.</span>
<span id="t153" class="t" style="left:1070.15px;top:956.47px;font-size:15px;line-height:18px;font-weight:700;color:#222;letter-spacing:0.934px;">5.</span>
<span id="t154" class="t" style="left:1109.90px;top:956.47px;font-size:15px;line-height:18px;font-weight:700;color:#222;letter-spacing:1.184px;">6.</span>
<span id="t155" class="t" style="left:1168.65px;top:956.47px;font-size:15px;line-height:18px;font-weight:700;color:#222;letter-spacing:0.934px;">7.</span>
<svg style="left:1185.5px;top:956px" width="17" height="17" viewBox="0 0 17 17" fill="none" stroke="#222"><circle cx="8.5" cy="8.5" r="7.5" stroke-width="1.1"/><path d="M4 10.6L6.9 7.6L9 9.6L12.6 5.6" stroke-width="1.3"/></svg>
<span id="t156" class="t" style="left:1265.40px;top:956.47px;font-size:15px;line-height:18px;font-weight:700;color:#222;letter-spacing:1.184px;">8.</span>
<svg style="left:1282.5px;top:956px" width="17" height="17" viewBox="0 0 17 17" fill="none" stroke="#222"><circle cx="8.5" cy="8.5" r="7.5" stroke-width="1.1"/><path d="M4 10.6L6.9 7.6L9 9.6L12.6 5.6" stroke-width="1.3"/></svg>
<span id="t157" class="t" style="left:1362.40px;top:956.47px;font-size:15px;line-height:18px;font-weight:700;color:#222;letter-spacing:1.184px;">9.</span>
<svg style="left:1379.5px;top:956px" width="17" height="17" viewBox="0 0 17 17" fill="none" stroke="#222"><circle cx="8.5" cy="8.5" r="7.5" stroke-width="1.1"/><path d="M4 10.6L6.9 7.6L9 9.6L12.6 5.6" stroke-width="1.3"/></svg>
<span id="t158" class="t" style="left:1454.90px;top:956.47px;font-size:15px;line-height:18px;font-weight:700;color:#222;letter-spacing:0.670px;">10.</span>
<svg style="left:1480px;top:956px" width="17" height="17" viewBox="0 0 17 17" fill="none" stroke="#222"><circle cx="8.5" cy="8.5" r="7.5" stroke-width="1.1"/><path d="M4 10.6L6.9 7.6L9 9.6L12.6 5.6" stroke-width="1.3"/></svg>
<span id="t159" class="t" style="left:1551.90px;top:956.47px;font-size:15px;line-height:18px;font-weight:700;color:#222;letter-spacing:1.084px;">11.</span>
<svg style="left:1577px;top:956px" width="17" height="17" viewBox="0 0 17 17" fill="none" stroke="#222"><circle cx="8.5" cy="8.5" r="7.5" stroke-width="1.1"/><path d="M4 10.6L6.9 7.6L9 9.6L12.6 5.6" stroke-width="1.3"/></svg>
</body></html>
